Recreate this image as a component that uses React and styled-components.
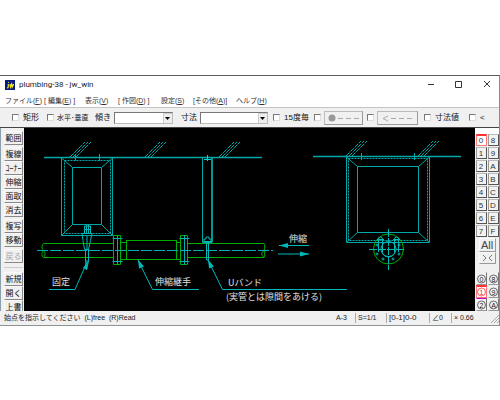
import React from "react";
import styled, { createGlobalStyle, css } from "styled-components";

const GlobalStyle = createGlobalStyle`
  * { box-sizing: border-box; }
  body { margin: 0; background: #fff; }
  button, input, select { font: inherit; margin: 0; padding: 0; }
`;

const Page = styled.div`
  padding-top: 75px;
  font-family: "Liberation Sans", "Noto Sans CJK JP", sans-serif;
  font-size: 8px;
  line-height: 10px;
  color: #222;
`;

const Window = styled.main`
  display: flex;
  flex-direction: column;
  background: #f0f0f0;
  border-top: 1px solid #5d5c61;
  border-right: 1px solid #8a8a90;
  border-bottom: 1px solid #8c9494;
  overflow: hidden;
`;

const TitleBar = styled.header`
  display: flex;
  align-items: center;
  height: 18px;
  padding: 0 7px 0 5px;
  gap: 4px;
  background: #fff;
`;

const Title = styled.h1`
  margin: 0;
  flex: 1;
  font: 400 8px/12px Roboto, sans-serif;
  color: #222;
`;

const AppIcon = styled.svg`
  width: 10px;
  height: 10px;
`;

const CaptionButtons = styled.div`
  display: flex;
  gap: 18px;
`;

const CaptionButton = styled.button`
  width: 10px;
  height: 10px;
  border: 0;
  background: transparent;
  svg { display: block; }
`;

const MenuBar = styled.nav`
  display: grid;
  grid-template-columns: 39px 41px 33px 43px 32px 43px 1fr;
  height: 13px;
  padding-left: 5px;
  align-items: center;
  background: #fff;
  white-space: nowrap;
`;

const MenuItem = styled.button`
  border: 0;
  background: transparent;
  text-align: left;
  color: #333;
  line-height: 10px;
  font-size: 7px;
`;

const OptionBar = styled.div`
  display: grid;
  grid-template-columns: 35px 48px 86px 92px 41px 53px 57px 45px 1fr;
  align-items: center;
  height: 20px;
  padding-left: 12px;
  border-top: 1px solid #c4c4c4;
  background: #f0f0f0;
  white-space: nowrap;
  color: #111;
`;

const Option = styled.div`
  display: flex;
  align-items: center;
  gap: 3px;
`;

const CheckLabel = styled.label`
  display: flex;
  align-items: center;
  gap: ${(p) => (p.$small ? "3px" : "4px")};
  font-size: ${(p) => (p.$small ? "7px" : "8px")};
`;

const CheckBox = styled.input`
  appearance: none;
  width: 7px;
  height: 7px;
  border: 1px solid;
  border-color: #777 #ddd #ddd #777;
  background: #fff;
`;

const Combo = styled.span`
  display: grid;
  width: ${(p) => p.$width}px;
  height: 12px;
  border: 1px solid;
  border-color: #777 #bbb #bbb #777;
  background: #fff;
  & > * { grid-area: 1 / 1; }
`;

const ComboSelect = styled.select`
  appearance: none;
  width: 100%;
  height: 10px;
  border: 0;
  background: transparent;
`;

const ComboArrow = styled.svg`
  justify-self: end;
  width: 9px;
  height: 10px;
  background: #eee;
  pointer-events: none;
`;

const LineButton = styled.button`
  display: flex;
  align-items: center;
  justify-content: center;
  width: ${(p) => p.$width}px;
  height: 14px;
  border: 1px solid;
  border-color: #bbb #999 #999 #bbb;
  background: #f0f0f0;
`;

const Workspace = styled.div`
  display: grid;
  grid-template-columns: 24px minmax(0, 1fr) 24px;
  border-top: 1px solid #444;
`;

const ToolRail = styled.aside`
  contain: size;
  overflow: hidden;
  display: flex;
  flex-direction: column;
  gap: 2px;
  padding: 3px 1px 0 3px;
  border-left: 1px solid #8ba0a8;
`;

const ToolGroup = styled.div`
  display: flex;
  flex-direction: column;
  ${(p) => p.$divided && css`
    margin-top: 2px;
    padding-top: 4px;
    border-top: 1px solid #ccc;
  `}
`;

const ToolButton = styled.button`
  width: 19px;
  height: 14px;
  border: 1px solid;
  border-color: #fafafa #888 #888 #fafafa;
  background: #f0f0f0;
  color: #111;
  line-height: 11px;
  white-space: nowrap;
  &:disabled { color: #aaa; }
`;

const Canvas = styled.svg`
  display: block;
  width: 100%;
  height: auto;
  background: #000;
  text {
    font-family: "Noto Sans CJK JP", sans-serif;
    fill: #e0e0e0;
  }
`;

const LayerRail = styled.aside`
  contain: size;
  overflow: hidden;
  display: flex;
  flex-direction: column;
  align-items: center;
  padding-top: 6px;
  background: linear-gradient(#fff 6px, #f0f0f0 6px);
`;

const LayerGrid = styled.div`
  display: grid;
  grid-template-columns: repeat(2, 11px);
  grid-auto-rows: ${(p) => (p.$round ? "13px" : "12px")};
  gap: ${(p) => (p.$round ? "0 1px" : "1px")};
  margin-top: ${(p) => (p.$round ? "8px" : "0")};
  margin-bottom: ${(p) => (p.$round ? "0" : "1px")};
`;

const LayerButton = styled.button`
  border: 1px solid;
  border-color: #bbb #555 #555 #999;
  background: #f2f2f2;
  color: #333;
  line-height: 9px;
  font-size: 8px;
  ${(p) => p.$round && css`border-color: #f0f0f0 #777 #999 #f0f0f0;`}
  ${(p) => p.$active && css`
    border-color: #f33 #f77 #f77;
    border-top-width: 2px;
    background: #fff;
  `}
  ${(p) => p.$marked && css`border-top: 1px solid #c0c;`}
  svg { display: block; margin: auto; }
`;

const WideButton = styled.button`
  width: 17px;
  height: 14px;
  border: 1px solid;
  border-color: #fafafa #999 #999 #fafafa;
  background: #f0f0f0;
  color: #444;
  font-size: 11px;
  line-height: 12px;
  svg { display: block; margin: auto; }
`;

const StatusBar = styled.footer`
  display: grid;
  grid-template-columns: minmax(0, 1fr) 19px 31px 43px 22px 48px;
  align-items: center;
  height: 14px;
  padding-left: 4px;
  background: #f0f0f0;
  color: #222;
  white-space: nowrap;
`;

const StatusCell = styled.span`
  display: flex;
  align-items: center;
  height: 10px;
  padding-left: ${(p) => (p.$divided ? "2px" : "0")};
  border-left: ${(p) => (p.$divided ? "1px solid #aaa" : "0")};
  line-height: 10px;
  font-size: ${(p) => (p.$small ? "7px" : "8px")};
`;

const Grip = styled.svg`
  margin-left: auto;
  width: 9px;
  height: 10px;
`;

const MENUS = [
  ["ファイル(", "F", ")"],
  ["[ 編集(", "E", ") ]"],
  ["表示(", "V", ")"],
  ["[ 作図(", "D", ") ]"],
  ["設定(", "S", ")"],
  ["[その他(", "A", ")]"],
  ["ヘルプ(", "H", ")"],
];

const TOOL_GROUPS = [
  { tools: ["範囲"] },
  { tools: ["複線", "ｺｰﾅｰ", "伸縮", "面取", "消去"] },
  { tools: ["複写", "移動"] },
  { tools: ["戻る"] },
  { tools: ["新規", "開く", "上書"], divided: true },
];

const LAYERS = ["0", "8", "1", "9", "2", "A", "3", "B", "4", "C", "5", "D", "6", "E", "7", "F"];
const GROUPS = ["0", "8", "1", "9", "2", "A"];

const Check = ({ label, name, small }) => (
  <CheckLabel $small={small}>
    <CheckBox type="checkbox" aria-label={name} />
    {label}
  </CheckLabel>
);

const ComboBox = ({ label, width }) => (
  <Combo $width={width}>
    <ComboSelect aria-label={label}><option></option></ComboSelect>
    <ComboArrow viewBox="0 0 9 10" aria-hidden="true">
      <path d="M.5 10V.5H9" fill="none" stroke="#ccc" />
      <path d="M2 4h5L4.5 7z" fill="#000" />
    </ComboArrow>
  </Combo>
);

const Hatch = ({ x, y }) => (
  <path
    d={`M${x} ${y}l15-15M${x + 3} ${y}l15-15M${x + 6} ${y}l15-15`}
    strokeDasharray="5 1"
  />
);

const Flange = ({ x }) => (
  <g>
    <path d={`M${x - 4} 235.5h7v29h-7z`} stroke="#00b000" />
    <path d={`M${x} 235v30M${x - 5} 238.5h10M${x - 5} 261.5h10`} stroke="#00b0b0" />
  </g>
);

const Drawing = () => (
  <Canvas viewBox="24 128 451 183" role="img" aria-label="配管図">
    <g fill="none" stroke="#00a8a8" strokeWidth="1">
      <path d="M44 157.5H262M313 156.5H461" strokeWidth="1.3" />
      <Hatch x={70} y={157} />
      <Hatch x={145} y={157} />
      <Hatch x={219} y={157} />
      <Hatch x={346} y={156} />
      <Hatch x={418} y={156} />

      <path d="M61.5 158V235.5H112.5V158M72.5 167.5H101.5V224.5H72.5zM61.5 158l11 9.5M112.5 158l-11 9.5M61.5 235.5l11-11M112.5 235.5l-11-11" />
      <path d="M64.5 160.5H110.5V233.5H64.5z" strokeDasharray="2 1" />
      <path d="M75.5 155v6M99.5 154v7" />

      <path d="M202.5 158V242.5H212V158" />
      <path d="M212 158V242" strokeWidth="2" opacity=".8" />
      <path d="M207.5 155v6M204 159.5h7" stroke="#00dada" />

      <path d="M346.5 157V242.5H429.5V157M357.5 166.5H418.5V232.5H357.5zM346.5 157l11 9.5M429.5 157l-11 9.5M346.5 242.5l11-10M429.5 242.5l-11-10" />
      <path d="M348.5 158.5H427.5V240.5H348.5z" strokeDasharray="2 1" />
      <path d="M361.5 153v7M414.5 153v7" />
    </g>

    <g fill="none" stroke="#00b000" strokeWidth="1">
      <path d="M43.5 243.5H113M43.5 257.5H113M121 242.5h5.5M121 259.5h5.5M177 242.5h5M177 259.5h5M188 243.5h76M188 257.5h76" />
      <path d="M43.5 243.5c-2 2-2 5 0 7s2 5 0 7c-2-1-2-5 0-7M264 243.5c1 2 1 5 0 7c-3 2-3 5 0 7c1-2 1-5 0-7" />
      <rect x="126.5" y="240.5" width="50" height="19" />
      <circle cx="388.5" cy="249" r="15" />
    </g>
    <Flange x={117.5} />
    <Flange x={184.5} />
    <path d="M37 250.5H273" fill="none" stroke="#00b0b0" strokeDasharray="11 2" />

    <g fill="none" stroke="#00b8b8" strokeWidth="1">
      <path d="M84.5 233v-7h6v7M86.5 225v8M88.5 225v8M84 229.5h7M82 233.5h10l-1.5 7-2 9h-4l-1.5-9zM85.5 249v12h3v-12M85.5 261l1 9 2-9M87 236v14" />
      <path d="M204 242v-3h2v-2h3v2h2v3M204 241.5h7M206.5 242v18h2v-18" />
      <path d="M49 289.5H75L87 262M199 289.5H152.5L138 260M347 289.5H222.5L208 260M309 245.5H279M278 254H309" />
    </g>
    <g fill="#00b8b8" stroke="none">
      <path d="M88 261l-5 7 4 2zM138 259.5l1 9 5-2zM208 259.5l1 9 5-2zM279 245.5l9-2.5v5zM309 254l-9-2.5v5z" />
    </g>

    <g fill="none" stroke="#00b8b8">
      <path d="M388.5 229v41M369 249.5h35" strokeDasharray="8 1" />
      <circle cx="388.5" cy="249" r="7.5" />
      <path d="M378.500 252V239a2 2 0 0 1 4 0v13M394.500 252V239a2 2 0 0 1 4 0v13M377 239.500h7M393 239.500h7" />
      <path d="M382 251a6.500 6 0 0 0 13 0" />
      {[[377, 245], [377, 254], [383, 259], [393, 259], [399, 254], [399, 245]].map(([x, y]) => (
        <circle key={`${x}-${y}`} cx={x} cy={y} r="1" />
      ))}
    </g>

    <g fontSize="9">
      <text x="52" y="285">固定</text>
      <text x="155" y="285">伸縮継手</text>
      <text x="228" y="286">Uバンド</text>
      <text x="226" y="300">(実管とは隙間をあける)</text>
      <text x="289" y="242">伸縮</text>
    </g>
  </Canvas>
);

export default function App() {
  return (
    <Page>
      <GlobalStyle />
      <Window>
        <TitleBar>
          <AppIcon viewBox="0 0 10 10" aria-hidden="true">
            <rect width="10" height="10" fill="#071b7c" />
            <path d="M3 2.5h1M3.3 4v3q0 1-1.5 1M5 4l.5 3 1.2-3 .5 3L8.7 4" fill="none" stroke="#f1e91f" strokeWidth="1.2" />
          </AppIcon>
          <Title>plumbing-38 - jw_win</Title>
          <CaptionButtons>
            <CaptionButton aria-label="最小化">
              <svg width="10" height="10"><path d="M2 4.5h6" stroke="#333" /></svg>
            </CaptionButton>
            <CaptionButton aria-label="最大化">
              <svg width="10" height="10"><path d="M1.5 1.5h6v6h-6z" fill="none" stroke="#333" /></svg>
            </CaptionButton>
            <CaptionButton aria-label="閉じる">
              <svg width="10" height="10"><path d="M2 1l6 6M8 1l-6 6" stroke="#333" /></svg>
            </CaptionButton>
          </CaptionButtons>
        </TitleBar>

        <MenuBar>
          {MENUS.map(([before, key, after]) => (
            <MenuItem key={key}>{before}<u>{key}</u>{after}</MenuItem>
          ))}
        </MenuBar>

        <OptionBar>
          <Check label="矩形" />
          <Check label="水平･垂直" small />
          <Option>傾き<ComboBox label="傾き" width={59} /></Option>
          <Option>寸法<ComboBox label="寸法" width={68} /></Option>
          <Check label="15度毎" />
          <Option>
            <Check name="端点" />
            <LineButton $width={39} aria-label="端点の種類">
              <svg width="34" height="8"><circle cx="5" cy="4" r="3.5" fill="#999" /><path d="M11 4.5h22" stroke="#aaa" strokeDasharray="5 3" /></svg>
            </LineButton>
          </Option>
          <Option>
            <Check name="矢印" />
            <LineButton $width={41} aria-label="矢印の種類">
              <svg width="34" height="8"><path d="M7 2L2 4.5 7 7" fill="none" stroke="#aaa" /><path d="M10 4.5h22" stroke="#aaa" strokeDasharray="5 3" /></svg>
            </LineButton>
          </Option>
          <Check label="寸法値" />
          <Check label="<" />
        </OptionBar>

        <Workspace>
          <ToolRail>
            {TOOL_GROUPS.map(({ tools, divided }) => (
              <ToolGroup key={tools[0]} $divided={divided}>
                {tools.map((t) => (
                  <ToolButton key={t} disabled={t === "戻る"}>{t}</ToolButton>
                ))}
              </ToolGroup>
            ))}
          </ToolRail>
          <Drawing />
          <LayerRail>
            <LayerGrid>
              {LAYERS.map((l) => <LayerButton key={l} $active={l === "0"}>{l}</LayerButton>)}
            </LayerGrid>
            <WideButton>All</WideButton>
            <WideButton aria-label="反転">
              <svg width="11" height="8"><path d="M1 1l3 3-3 3M10 1L7 4l3 3" fill="none" stroke="#777" /></svg>
            </WideButton>
            <LayerGrid $round>
              {GROUPS.map((g) => (
                <LayerButton key={g} $round $active={g === "1"} $marked={g === "2"} aria-label={`グループ ${g}`}>
                  <svg width="9" height="10" viewBox="0 0 9 10">
                    <circle cx="4.5" cy="5" r="4" fill="none" stroke={g === "1" ? "#f33" : "#444"} strokeWidth=".8" />
                    <text x="4.5" y="7.5" fontSize="7" textAnchor="middle" fill={g === "1" ? "#e22" : "#222"}>{g}</text>
                  </svg>
                </LayerButton>
              ))}
            </LayerGrid>
          </LayerRail>
        </Workspace>

        <StatusBar>
          <StatusCell $small>始点を指示してください&nbsp; (L)free&nbsp; (R)Read</StatusCell>
          <StatusCell $small>A-3</StatusCell>
          <StatusCell $divided $small>S=1/1</StatusCell>
          <StatusCell $divided>[0-1]0-0</StatusCell>
          <StatusCell $divided $small>∠0</StatusCell>
          <StatusCell $divided $small>
            × 0.66
            <Grip viewBox="0 0 9 10" aria-hidden="true"><path d="M1 10l8-8M4 10l5-5M7 10l2-2" stroke="#aaa" /></Grip>
          </StatusCell>
        </StatusBar>
      </Window>
    </Page>
  );
}
